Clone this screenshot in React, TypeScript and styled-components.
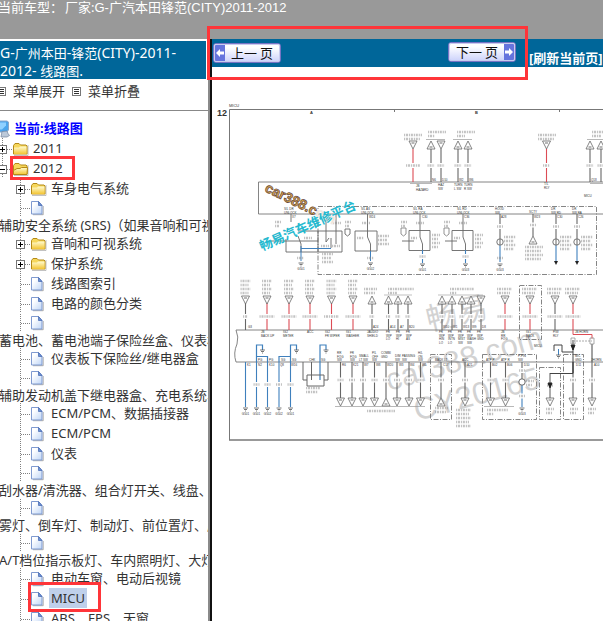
import React from 'react';
import styled, { createGlobalStyle, css } from 'styled-components';

const Global = createGlobalStyle`
  * { box-sizing: border-box; }
  body { margin: 0; background: #fff; color: #333; font: 13px/20px "Noto Sans", "Noto Sans CJK SC", sans-serif; }
  a { color: inherit; text-decoration: none; }
  svg { display: block; flex: none; }
`;

const Page = styled.div`
  display: grid;
  grid-template: 39px minmax(0, 1fr) / 210px minmax(0, 1fr);
  height: 100vh;
  overflow: hidden;
`;
const Header = styled.header`
  grid-column: 1 / -1;
  display: flex;
  gap: 2px;
  padding-top: 1px;
  background: #999;
  color: #fff;
  line-height: 12px;
  white-space: nowrap;
`;
const HeaderText = styled.span`
  margin-left: -2px;
`;
const Latin = styled.span`
  font: 13px/12px "Liberation Sans", sans-serif;
`;
const TitleLatin = styled.span`
  font-size: 14px;
`;
const Sidebar = styled.nav`
  border-right: 2px solid #8a8a8a;
  padding-top: 2px;
  overflow: hidden;
  white-space: nowrap;
`;
const Title = styled.h1`
  margin: 0 2px 0 0;
  padding: 3px 0 1px;
  height: 38px;
  background: #069;
  color: #fff;
  font-size: 13px;
  font-weight: 400;
  line-height: 17px;
`;
const MenuBar = styled.div`
  display: flex;
  align-items: center;
  gap: 7px;
  height: 32px;
  margin-left: -3px;
  padding-bottom: 7px;
  border-bottom: 1px solid #888;
  margin-bottom: 7px;
`;
const TextButton = styled.button`
  display: flex;
  align-items: center;
  gap: 7px;
  padding: 0;
  border: 0;
  background: none;
  color: inherit;
  font: inherit;
`;
const Tree = styled.div`
  margin-left: -6px;
`;
const Row = styled.div<{ $level: number; $blank?: boolean }>`
  display: flex;
  align-items: center;
  height: ${p => (p.$blank ? 18 : 20)}px;
  padding-left: ${p => (p.$level > 1 ? 18 : 0)}px;
  overflow: ${p => (p.$blank ? 'hidden' : 'visible')};
`;
const Root = styled(Row)`
  gap: 2px;
  color: #00f;
  font-weight: 700;
`;
const Toggle = styled.button`
  padding: 0;
  border: 0;
  background: none;
`;
const Marked = styled.div<{ $on?: boolean; $deep?: boolean }>`
  position: relative;
  display: flex;
  align-items: center;
  gap: 3px;
  ${p => p.$on && css`
    &::after {
      content: '';
      position: absolute;
      inset: ${p.$deep ? '-6px -14px -4px -2px' : '-2px -12px -2px -2px'};
      border: 3px solid #ff3539;
    }
  `}
`;
const Label = styled.a<{ $selected?: boolean }>`
  line-height: 20px;
  ${p => p.$selected && css`
    background: #bfd0ea;
    margin-left: -2px;
    padding: 0 2px;
  `}
`;
const Overflowing = styled.a`
  display: block;
  height: 17px;
  padding: 2px 0 0 5px;
  line-height: 15px;
`;
const Content = styled.main`
  position: relative;
  border-left: 2px solid #111;
  min-width: 0;
`;
const Toolbar = styled.div`
  display: flex;
  align-items: flex-start;
  height: 28px;
  padding: 4px 0 0 1px;
  background: #069;
  overflow: hidden;
`;
const PageButton = styled.button<{ $next?: boolean }>`
  display: flex;
  flex: none;
  flex-direction: ${p => (p.$next ? 'row-reverse' : 'row')};
  width: 68px;
  height: 20px;
  margin: ${p => (p.$next ? '-1px 13px 0 167px' : '0')};
  padding: 1px;
  border: 1px solid #7774c4;
  border-radius: 3px;
  outline: 1px solid #c9cbee;
  outline-offset: -2px;
  background: linear-gradient(#fff 20%, #ccd2fb);
  color: #111;
  font: 400 13px/16px "Noto Sans CJK SC", sans-serif;
`;
const ButtonText = styled.span`
  flex: 1;
  text-align: center;
`;
const Refresh = styled.a`
  padding-top: 6px;
  color: #fff;
  font-weight: 700;
  line-height: 18px;
  white-space: nowrap;
`;
const Frame = styled.div`
  position: absolute;
  z-index: 1;
  top: -13px;
  left: -5px;
  width: 321px;
  height: 54px;
  border: 3px solid #ff3539;
`;
const Figure = styled.div`
  padding-top: 28px;
  overflow: hidden;
`;

const Bullet = () => (
  <svg width="9" height="9" viewBox="0 0 9 9" fill="none" stroke="#333" shapeRendering="crispEdges">
    <path d="M.5.5h8v8h-8z" stroke="#777" /><path d="M2 2.5h5M2 4.5h5M2 6.5h5" />
  </svg>
);

const Branch = ({ box, open }: { box?: boolean; open?: boolean }) => (
  <svg width="18" height="20" viewBox="0 0 18 20" fill="none" shapeRendering="crispEdges">
    <path d="M8.5 0v20" stroke="#808080" strokeDasharray="1 1" />
    <path d="M9 11.5h9" stroke="#808080" strokeDasharray="1 1" />
    {box && <><path d="M4.500 7.500h8v8h-8z" fill="#fff" stroke="#777" /><path d="M6 11.500h5" stroke="#000" />{!open && <path d="M8.500 9v5" stroke="#000" />}</>}
  </svg>
);

const Folder = ({ open }: { open?: boolean }) => (
  <svg width="18" height="20" viewBox="0 0 18 20">
    <defs><linearGradient id="fold" x2="0" y2="1"><stop stopColor="#fffbd0" /><stop offset="1" stopColor="#f3c534" /></linearGradient></defs>
    <path d="M2 17.500h14V7" fill="none" stroke="#999" opacity=".6" />
    <path d="M1.500 16V7.500L3 5.500h4l1.500 1.500h5.500l1 1V16z" fill="#f6d75b" stroke="#b58a17" />
    {open
      ? <path d="M1.500 16.500V12.500L5 10.500h3l1.500-1h6l-.5 7z" fill="url(#fold)" stroke="#b58a17" />
      : <path d="M2 16V9.500h5l1-1h6.500V16z" fill="url(#fold)" />}
  </svg>
);

const Doc = () => (
  <svg width="18" height="20" viewBox="0 0 18 20">
    <defs><linearGradient id="doc" x2="1" y2="1"><stop offset=".25" stopColor="#fff" /><stop offset="1" stopColor="#bed5f7" /></linearGradient></defs>
    <path d="M3 17.700h10.200V9" fill="none" stroke="#777" opacity=".6" />
    <path d="M1.500 4.500h7l3.500 4v8.500H1.500z" fill="url(#doc)" stroke="#7f9ad0" />
    <path d="M8.500 4.500v4H12z" fill="#6e94d6" stroke="#4264ad" strokeWidth=".7" />
  </svg>
);

const Computer = () => (
  <svg width="18" height="20" viewBox="0 0 18 20">
    <path d="M1 3l12 0 1.500 1v8l-2 2H1z" fill="#4ba5ec" stroke="#8aa5c9" />
    <path d="M2 4.500h10v3l-4 4H2z" fill="#8fd0ff" />
    <path d="M8 13.500l5-.5 1 2.500 1.500 2-2.500 1.500H7z" fill="#bcc9d9" stroke="#71839c" strokeWidth=".7" />
  </svg>
);

type Item = { text?: string; long?: string; folder?: boolean; open?: boolean; top?: boolean; mark?: boolean; selected?: boolean };
const items: Item[] = [
  { text: '2011', folder: true, top: true },
  { text: '2012', folder: true, top: true, open: true, mark: true },
  { text: '车身电气系统', folder: true },
  { long: '辅助安全系统 (SRS)（如果音响和可视系统' },
  { text: '音响和可视系统', folder: true },
  { text: '保护系统', folder: true },
  { text: '线路图索引' },
  { text: '电路的颜色分类' },
  { long: '蓄电池、蓄电池端子保险丝盒、仪表板' },
  { text: '仪表板下保险丝/继电器盒' },
  { long: '辅助发动机盖下继电器盒、充电系统、' },
  { text: 'ECM/PCM、数据插接器' },
  { text: 'ECM/PCM' },
  { text: '仪表' },
  { long: '刮水器/清洗器、组合灯开关、线盘、' },
  { long: '雾灯、倒车灯、制动灯、前位置灯、尾灯' },
  { long: 'A/T档位指示板灯、车内照明灯、大灯' },
  { text: '电动车窗、电动后视镜' },
  { text: 'MICU', mark: true, selected: true },
  { text: 'ABS、EPS、天窗' },
];

const TreeItem = ({ item }: { item: Item }) => (
  <>
    <Row $level={item.top ? 1 : 2} $blank={!!item.long}>
      {item.folder
        ? <Toggle aria-label={item.open ? '折叠' : '展开'}><Branch box open={item.open} /></Toggle>
        : <Branch />}
      <Marked $on={item.mark} $deep={!item.top}>
        {item.folder ? <Folder open={item.open} /> : <Doc />}
        {item.text && <Label href="#" $selected={item.selected}>{item.text}</Label>}
      </Marked>
    </Row>
    {item.long && <Overflowing href="#">{item.long}</Overflowing>}
  </>
);

const RED = '#dc4c55';
const BLUE = '#3f80bd';
const INK = '#666';

/* Fine print next to a wire: rows of short marks. */
const Print = ({ x, y, w, rows = 1 }: { x: number; y: number; w: number; rows?: number }) => (
  <g stroke="#888" strokeWidth="2.400" opacity=".5">
    {Array.from({ length: rows }, (_, i) => (
      <path key={i} d={`M${x} ${y + i * 4}h${w - (i % 2) * 2}`} strokeDasharray="1.200 .8 2 .9" />
    ))}
  </g>
);

const Tri = ({ x, y, up }: { x: number; y: number; up?: boolean }) => (
  <g>
    <path d={up ? `M${x} ${y}l4 8h-8z` : `M${x} ${y + 8}l4-8h-8z`} fill="#fff" stroke="#666" strokeWidth=".8" />
    <path d={`M${x - 1.5} ${up ? y + 6 : y + 2}h3`} stroke="#888" strokeWidth="1.200" />
  </g>
);

const Wire = ({ x, from, to, color = INK, tag = 0 }: { x: number; from: number; to: number; color?: string; tag?: number }) => {
  const mid = (from + to) / 2;
  return (
    <g>
      <path d={`M${x} ${from}V${to}`} stroke={color} strokeWidth="1.100" />
      {tag > 0 && <><path d={`M${x - tag / 2} ${mid}h${tag}`} stroke="#fff" strokeWidth="5" /><Print x={x - tag / 2} y={mid} w={tag} /></>}
    </g>
  );
};

const Ground = ({ x, y, name }: { x: number; y: number; name?: string }) => (
  <g>
    <path d={`M${x - 2.5} ${y}h5M${x - 1.5} ${y + 1.5}h3M${x - .5} ${y + 3}h1`} stroke="#555" strokeWidth=".8" />
    {name && <text x={x} y={y + 7} textAnchor="middle" fontSize="3" fill="#333">{name}</text>}
  </g>
);

const Words = ({ x, y, lines }: { x: number; y: number; lines: string[] }) => (
  <text x={x} y={y}>{lines.map((l, i) => <tspan key={i} x={x} dy={i ? 3.5 : 0}>{l}</tspan>)}</text>
);

const Diagram = () => (
  <svg width="391" height="350" viewBox="212 95 391 350" fill="none" fontFamily="Liberation Sans, sans-serif" role="img" aria-label="MICU">
    <g fontSize="31" fill="#d2d2d2" fontFamily="Liberation Sans, Noto Sans CJK SC, sans-serif">
      <text transform="translate(429 331) rotate(-13)">畅易</text>
      <text transform="translate(389 391) rotate(-16)">car388.com</text>
      <text transform="translate(417 421) rotate(-15)">CY20165</text>
    </g>
    <path d="M229.500 440V109.500H603M394.500 109v3M559.500 109v3" stroke="#777" />
    <path d="M229 440H603" stroke="#777" strokeWidth="1.300" />
    <path d="M603 182H258.500V214H603M603 330H236q3 7 1 14q-4 9-1 18H603" stroke="#777" strokeWidth=".9" />
    <g stroke="#777" strokeWidth=".9" strokeDasharray="5 1.500 1 1.500">
      <path d="M318 206.500H596.500V274.500H318z" />
      <path d="M430.500 354.500h21v65h-21zM482.500 354.500h54v65h-54zM539.500 367.500h21v52h-21zM563.500 354.500h20v65h-20zM519.500 285.500h22v54h-22z" />
    </g>

    {[[413, 0, 1], [431, 1, 0], [441, 0, 0], [458, 1, 0], [468, 1, 0], [546.5, 0, 1], [590, 1, 0], [601, 1, 0]].map(([x, up, red]) => (
      <g key={x}><Wire x={x} from={149} to={182} color={red ? RED : INK} tag={x === 413 ? 14 : 7} /><Tri x={x} y={141} up={!!up} /></g>
    ))}
    <Print x={404} y={135} w={18} rows={2} /><Print x={428} y={132} w={18} /><Print x={428} y={136} w={7} />
    <Print x={457} y={132} w={18} /><Print x={457} y={136} w={8} /><Print x={538} y={135} w={18} rows={2} /><Print x={592} y={132} w={11} rows={2} />
    <path d="M426 139.500h19M453 139.500h19M587 139.500h16M410 183.500h22M590 183.500h13" stroke="#999" strokeWidth=".7" />

    {[420, 463].map(x => (
      <g key={x}>
        <path d={`M${x - 11} 230.500h21v20h-21zM${x} 214v23l2.500 7v7M${x - 18} 241h12`} stroke={INK} strokeWidth=".9" />
        <Print x={x - 4} y={223} w={8} /><Print x={x - 9} y={238} w={6} /><Print x={x + 12} y={235} w={8} rows={4} />
        <path d={`M${x - 19} 228h5v6l-2.500 2-2.500-2z`} stroke="#777" strokeWidth=".8" /><Print x={x - 19} y={222} w={6} rows={2} />
        <Wire x={x + 2.5} from={250} to={263} color={BLUE} tag={6} /><Ground x={x + 2.5} y={264} name={x === 420 ? 'G501' : 'G503'} />
      </g>
    ))}
    <path d="M286 239v13h56V231h-24M298 231h20v21M355 231h22v20h-22zM367.500 214v23l3 7v7M291 214v8M336 214v30M326 214v28l3-4M331 238v10M298 236l3 8v8M271 241h47M350 234v-5h-5v5l2.500 2z" stroke={INK} strokeWidth=".9" />
    <path d="M301 248.500h30M301 246v15M370.500 251v10" stroke={BLUE} />
    <Print x={275} y={222} w={6} rows={2} /><Print x={304} y={238} w={8} /><Print x={321} y={246} w={8} /><Print x={332} y={246} w={8} />
    <Print x={333} y={223} w={8} /><Print x={345} y={222} w={6} rows={2} /><Print x={362} y={223} w={8} /><Print x={357} y={238} w={7} />
    <Print x={378} y={236} w={11} rows={3} /><Print x={322} y={254} w={11} rows={3} /><Print x={297} y={258} w={7} /><Print x={367} y={258} w={7} />
    <Ground x={301} y={263} name="G501" /><Ground x={370.500} y={263} name="G502" />
    {[500, 556, 577].map(x => (
      <g key={x}><Wire x={x} from={214} to={239} tag={6} /><Wire x={x} from={245} to={262} color={BLUE} />
        <circle cx={x} cy="242" r="3.200" fill="#fff" stroke={INK} strokeWidth=".9" /><path d={`M${x} 239v6`} stroke={INK} />
        <Print x={x + 4} y={237} w={12} rows={4} />
        {x > 500 ? <path d={`M${x - 2} 261h4l-2 4z`} fill="#222" /> : <><Print x={497} y={258} w={6} /><Ground x={x} y={264} name="G503" /></>}
      </g>
    ))}
    <Wire x={533} from={214} to={236} tag={6} /><Tri x={533} y={236} up /><Print x={525} y={247} w={18} rows={4} />

    <g fill="#333" fontSize="3">
      <text x="229" y="107" fontSize="4">MICU</text>
      <text x="217" y="116" fontSize="9" fontWeight="700">12</text>
      <text x="310" y="114" fontSize="4" fontWeight="700">A</text><text x="475" y="114" fontSize="4" fontWeight="700">B</text>
      <Words x={416} y={187} lines={['JB', 'HAZARD']} /><Words x={438} y={186} lines={['HAZ', 'SW']} />
      <Words x={454} y={186} lines={['TURN', 'L SW']} /><Words x={464} y={186} lines={['TURN', 'R SW']} />
      <Words x={544} y={185} lines={['T/L', 'RLY']} /><text x="584" y="197">MICU</text>
      <Words x={284} y={210} lines={['S/L DR', 'UNLOCK']} /><Words x={361} y={210} lines={['S/L AS', 'UNLOCK']} />
      <Words x={413} y={210} lines={['S/L RA', 'UNLOCK']} /><Words x={457} y={210} lines={['S/L RD', 'UNLOCK']} />
      <Words x={495} y={210} lines={['HOOD', 'SW']} /><text x="529" y="213">SCTY</text>
      <Words x={551} y={210} lines={['DR', 'SW RD']} /><Words x={572} y={210} lines={['DR', 'SW RA']} />
      <Words x={261} y={333} lines={['JB', 'BACK UP']} /><Words x={283} y={333} lines={['IG2', 'METER']} /><text x="307" y="333">ACC</text>
      <Words x={325} y={333} lines={['IG2', 'FR WIPER']} /><Words x={346} y={333} lines={['IG1', 'WASHER']} /><Words x={367} y={333} lines={['JAUDIO', 'SHIELD']} />
      {[386, 396, 406].map((x, i) => <Words key={x} x={x} y={333} lines={['FR', 'WIP', ['LO', 'HI', 'AS'][i]]} />)}
      {[439, 448, 458, 467, 477].map((x, i) => <Words key={x} x={x} y={333} lines={['FR', 'WIP', ['HIN', 'INTN', 'MIST', 'WASH', 'GND'][i], ...(i < 4 ? [['LO', 'LO', 'SW', 'SW'][i]] : [])]} />)}
      <Words x={501} y={333} lines={['JB', 'RR', 'FOG']} /><Words x={526} y={333} lines={['IG1', 'BACK', 'LT']} /><Words x={553} y={333} lines={['P/W', 'RLY']} /><text x="575" y="333">JB HORN</text>
      <Words x={337} y={354} lines={['RR', 'FOG', 'SW']} /><Words x={350} y={354} lines={['FR', 'FOG', 'SW']} /><Words x={359} y={357} lines={['SMALL', 'LT SW']} />
      <Words x={372} y={354} lines={['P/L', 'OFF', 'SW']} /><Words x={381} y={354} lines={['COMBI', 'GND']} /><Words x={395} y={357} lines={['DIM', 'SW']} />
      <Words x={402} y={357} lines={['PASSING', 'SW']} /><Words x={418} y={354} lines={['H/L', 'ON', 'SW']} /><text x="435" y="361">BACK LT</text><text x="462" y="361">ACC</text>
      <text x="486" y="361">ATP P</text><text x="501" y="361">ATP R</text><Words x={518} y={357} lines={['P-PIN', 'SW']} /><Words x={575} y={357} lines={['M/C', 'GND']} /><text x="591" y="361">JHORN</text>
      <text x="309" y="361">CHK</text><text x="321" y="361">SG</text><text x="534" y="347">MICU</text>
      {[258, 269].map(x => <text key={x} x={x} y="361">PG</text>)}{[281, 292].map(x => <text key={x} x={x} y="361">SG</text>)}
      {[[247, 'K1'], [258, 'N2'], [269, 'K10'], [280, 'Q8'], [291, 'W16'], [342, 'R6'], [353, 'K21'], [364, 'W7'], [376, 'W8'], [387, 'W20'], [399, 'W3'], [410, 'W4'], [422, 'W5'], [443, 'C17'], [467, 'A21'], [492, 'B02'], [507, 'B06'], [524, 'D10'], [576, 'D11'], [594, 'A10']].map(([x, s]) => <text key={x} x={x} y="366">{s}</text>)}
      {[[432, 'N6'], [442, 'D10'], [459, 'W2'], [469, 'W6'], [591, 'Q18']].map(([x, s]) => <text key={x} x={x} y="181">{s}</text>)}
      {[[292, 'X7'], [369, 'W24'], [422, 'C30'], [464, 'C36'], [501, 'A28'], [534, 'W23'], [557, 'C30'], [578, 'C26']].map(([x, s]) => <text key={x} x={x} y="218">{s}</text>)}
      {[[248, 'G3'], [373, 'A24'], [390, 'A14'], [400, 'A7'], [409, 'B20'], [443, 'W10'], [453, 'W1'], [463, 'W13'], [472, 'W9'], [482, 'D8']].map(([x, s]) => <text key={x} x={x} y="328">{s}</text>)}
      {[245.5, 256.5, 267.5, 279, 290.5].map((x, i) => <Ground key={x} x={x} y={408} name={i === 2 || i === 3 ? 'G502' : 'G501'} />)}
      <Ground x={522} y={408} name="G503" />
    </g>

    {[[245.5, 0, 0], [267, 0, 1], [289, 0, 1], [310, 0, 1], [331.5, 0, 1], [353, 0, 1], [372, 1, 0], [388.5, 1, 0], [398, 1, 0], [408, 1, 0], [442, 1, 0], [452, 1, 0], [462, 1, 0], [471, 1, 0], [481, 0, 0], [505, 0, 1], [530, 0, 1], [555, 0, 0], [573, 0, 1]].map(([x, up, red]) => (
      <g key={x}><Wire x={x} from={303} to={330} color={red ? RED : INK} tag={red || x === 555 ? 15 : 5} /><Tri x={x} y={296} up={!!up} />
        {x < 360 && <Print x={x - 5} y={281} w={10} rows={4} />}{x > 500 && <Print x={x - 8} y={289} w={15} rows={2} />}</g>
    ))}
    <Print x={364} y={289} w={13} rows={2} /><Print x={388} y={289} w={26} /><Print x={388} y={293} w={9} /><Print x={450} y={289} w={24} /><Print x={450} y={293} w={7} />
    <path d="M384 295h28M438 295h45" stroke="#999" strokeWidth=".6" />

    {[245.5, 256.5, 267.5, 279, 290.5].map(x => <Wire key={x} x={x} from={362} to={407} color={BLUE} tag={x > 250 ? 6 : 0} />)}
    <path d="M256.500 362V345h6v5M256.500 356.500h11V362M279 362v-5.500h11.500M290.500 362V345h6v5M320 380V345h6v5" stroke={BLUE} strokeWidth="1.200" />
    <Ground x={262.500} y={350} /><Ground x={296.500} y={350} /><Ground x={326} y={350} />
    <path d="M303 362v18h4M311.500 362v18M328 362v18h-4M307 375h17v11h-17z" stroke={INK} /><Print x={306} y={388} w={14} rows={2} />
    {[[340.5, 0], [352, 0], [363, 0], [374.5, 0], [386, 1], [397, 0], [409, 0], [420.5, 0], [441, 1], [465, 0], [490.5, 0], [505.5, 0], [550, 0], [573, 0], [592, 0]].map(([x, up]) => (
      <g key={x}><Wire x={x} from={x === 550 ? 373 : 362} to={398} tag={6} /><Tri x={x} y={398} up={!!up} /></g>
    ))}
    <Wire x={522} from={362} to={379} tag={6} /><Wire x={522} from={385} to={407} color={BLUE} tag={6} />
    <circle cx="522" cy="382" r="3.200" fill="#fff" stroke={INK} /><Print x={526} y={381} w={8} rows={2} />
    <path d="M550 373.500h23V340M573 352h-11v-7h-8v6M592 362v-18M573 362v11" stroke="#444" /><path d="M571 345h4l-2 5zM548 383h4l-2 5z" fill="#222" stroke="#222" />
    <path d="M573 330v4.500h19v4" stroke={RED} /><path d="M558.500 349v6" stroke={BLUE} /><Ground x={558.500} y={355} />
    <path d="M573 341h19" stroke="#aaa" strokeDasharray="2 1" /><path d="M590 338h4v6h-4zM571 338h4v6h-4z" stroke="#888" strokeWidth=".7" />
    <path d="M335 406.500h90M484 406.500h30" stroke="#999" strokeWidth=".7" /><Print x={367} y={411} w={28} />
    <Print x={435} y={408} w={13} rows={2} /><Print x={456} y={410} w={15} rows={5} /><Print x={487} y={410} w={21} /><Print x={487} y={414} w={7} />
    {[546, 570, 588].map(x => <Print key={x} x={x} y={409} w={8} rows={2} />)}

    <g transform="translate(264 191) rotate(26)" fontSize="14" fontWeight="700">
      <text fill="#dba94a" stroke="#64453f" strokeWidth=".7">car388.c<tspan fill="#f9e3d0" stroke="#eee">om</tspan></text>
    </g>
    <text transform="translate(262 251) rotate(-24)" fontSize="13" fontWeight="700" fontFamily="Noto Sans CJK SC, sans-serif" fill="#25b9cf">畅易汽车维修平台</text>
  </svg>
);

const Arrow = ({ next }: { next?: boolean }) => (
  <svg width="10" height="16" viewBox="0 0 10 16">
    <path d="M0 0h10v16H0z" fill="#6574dd" />
    <path d={next ? 'M9 8L5 4v2.500H1v3h4V12z' : 'M1 8l4-4v2.500h4v3H5V12z'} fill="#fff" />
  </svg>
);

export default function App() {
  return (
    <>
      <Global />
      <Page>
        <Header>
          <HeaderText>当前车型：</HeaderText>
          <span>厂家:<Latin>G-</Latin>广汽本田锋范<Latin>(CITY)2011-2012</Latin></span>
        </Header>
        <Sidebar>
          <Title>
            <TitleLatin>G-</TitleLatin>广州本田<TitleLatin>-</TitleLatin>锋范<TitleLatin>(CITY)-2011-</TitleLatin><br />
            <TitleLatin>2012- </TitleLatin>线路图<TitleLatin>.</TitleLatin>
          </Title>
          <MenuBar>
            <TextButton><Bullet />菜单展开</TextButton>
            <TextButton><Bullet />菜单折叠</TextButton>
          </MenuBar>
          <Tree>
            <Root $level={0}><Computer /><Label href="#">当前:线路图</Label></Root>
            {items.map((item, i) => <TreeItem key={i} item={item} />)}
          </Tree>
        </Sidebar>
        <Content>
          <Toolbar>
            <PageButton><Arrow /><ButtonText>上一 页</ButtonText></PageButton>
            <PageButton $next><Arrow next /><ButtonText>下一 页</ButtonText></PageButton>
            <Refresh href="#">[刷新当前页]</Refresh>
          </Toolbar>
          <Frame />
          <Figure><Diagram /></Figure>
        </Content>
      </Page>
    </>
  );
}
